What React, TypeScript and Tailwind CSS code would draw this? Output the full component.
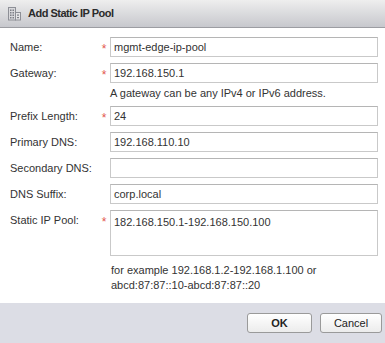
import React from 'react';

// building glyph used in the title bar
const PoolIcon = () => (
  <svg width="15" height="15" viewBox="0 0 15 15" className="shrink-0">
    <rect x="1.5" y="1.5" width="7" height="12.5" fill="#d9d9dc" stroke="#8d8f96" />
    <rect x="8.5" y="6.5" width="5" height="7.5" fill="#e4e4e6" stroke="#8d8f96" />
    {[3.5, 6, 8.5, 11].map((y) => (
      <g key={y}>
        <rect x="3" y={y} width="1.5" height="1.5" fill="#7d7f86" />
        <rect x="5.5" y={y} width="1.5" height="1.5" fill="#7d7f86" />
      </g>
    ))}
    {[8.5, 11].map((y) => (
      <rect key={y} x="10" y={y} width="2" height="1.2" fill="#7d7f86" />
    ))}
  </svg>
);

const Req = () => <span className="text-[#e2574f] text-[12px] leading-none mt-[4px]">*</span>;

type RowProps = { label: string; value?: string; required?: boolean; tall?: boolean };

const Row: React.FC<RowProps> = ({ label, value = '', required, tall }) => (
  <div className="flex items-start">
    <div className="w-[88px] h-[20px] flex items-center whitespace-nowrap">{label}</div>
    <div className="w-[12px] h-[20px] flex items-center justify-center">{required && <Req />}</div>
    <div
      className={`w-[268px] ${tall ? 'h-[46px] items-start pt-[3px]' : 'h-[20px] items-center'} flex border border-[#c9c9c9] border-t-[#b5b5b5] bg-white px-[3px]`}
    >
      {value}
    </div>
  </div>
);

export default function App() {
  return (
    <div
      className="w-[385px] h-[343px] bg-white flex flex-col text-[11px] text-[#333]"
      style={{ fontFamily: '"Liberation Sans", Arial, sans-serif' }}
    >
      {/* title bar */}
      <div className="h-[28px] shrink-0 flex items-center gap-[6px] pl-[7px] bg-gradient-to-b from-[#eeeeee] to-[#c7c8cd] border-b border-[#9c9da2]">
        <PoolIcon />
        <span className="font-bold text-[#2b2b2b] text-[11px] tracking-[-0.5px]">Add Static IP Pool</span>
      </div>

      {/* form */}
      <div className="flex-1 flex flex-col pl-[10px] pt-[9px]">
        <Row label="Name:" value="mgmt-edge-ip-pool" required />
        <div className="mt-[6px]">
          <Row label="Gateway:" value="192.168.150.1" required />
        </div>
        <div className="pl-[100px] mt-[3px] h-[14px] leading-[14px]">A gateway can be any IPv4 or IPv6 address.</div>
        <div className="mt-[6px] flex flex-col gap-[6px]">
          <Row label="Prefix Length:" value="24" required />
          <Row label="Primary DNS:" value="192.168.110.10" />
          <Row label="Secondary DNS:" />
          <Row label="DNS Suffix:" value="corp.local" />
          <Row label="Static IP Pool:" value="182.168.150.1-192.168.150.100" required tall />
        </div>
        <div className="pl-[101px] mt-[7px] leading-[15px]">
          <div>for example 192.168.1.2-192.168.1.100 or</div>
          <div>abcd:87:87::10-abcd:87:87::20</div>
        </div>
      </div>

      {/* footer */}
      <div className="h-[40px] shrink-0 bg-[#dcdde5] flex items-center justify-end gap-[8px] pr-[3px]">
        <button className="w-[65px] h-[20px] rounded-[3px] border border-[#9a9a9a] bg-gradient-to-b from-white to-[#ececec] font-bold text-[#222]">
          OK
        </button>
        <button className="w-[62px] h-[20px] rounded-[3px] border border-[#9a9a9a] bg-gradient-to-b from-white to-[#ececec] text-[#222]">
          Cancel
        </button>
      </div>
    </div>
  );
}
